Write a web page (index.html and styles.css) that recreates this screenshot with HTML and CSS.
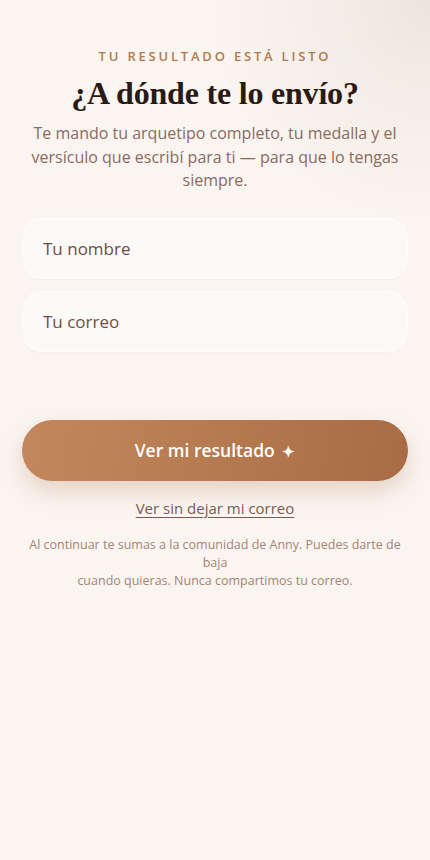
FILE: index.html
```html
<!DOCTYPE html>
<html lang="es">
<head>
<meta charset="utf-8">
<meta name="viewport" content="width=device-width, initial-scale=1">
<title>¿A dónde te lo envío?</title>
<link rel="stylesheet" href="styles.css">
</head>
<body>
<main class="page">
  <p class="eyebrow">TU RESULTADO ESTÁ LISTO</p>
  <h1 class="title">¿A dónde te lo envío?</h1>
  <p class="lead">Te mando tu arquetipo completo, tu medalla y el versículo que escribí para ti — para que lo tengas siempre.</p>
  <form class="form">
    <input class="field" type="text" placeholder="Tu nombre">
    <input class="field" type="email" placeholder="Tu correo">
    <button class="cta" type="button">Ver mi resultado <span class="spark">✦</span></button>
  </form>
  <a class="skip" href="#">Ver sin dejar mi correo</a>
  <p class="note">Al continuar te sumas a la comunidad de Anny. Puedes darte de baja<br>cuando quieras. Nunca compartimos tu correo.</p>
</main>
</body>
</html>
```
FILE: styles.css
```css
* { box-sizing: border-box; }
html, body { margin: 0; padding: 0; }
body {
  min-height: 860px;
  background:
    radial-gradient(circle at 100% 0%, #efe4dc 0, rgba(240,230,222,0.6) 90px, rgba(250,245,241,0) 220px),
    #faf5f1;
  font-family: "Open Sans", "Liberation Sans", sans-serif;
  color: #8a6a5e;
}
.page {
  padding: 47px 22px 40px;
  display: flex;
  flex-direction: column;
  align-items: center;
  text-align: center;
}
.eyebrow {
  margin: 0;
  font-size: 13px;
  font-weight: 600;
  letter-spacing: 2.8px;
  color: #b07a52;
  line-height: 18px;
}
.title {
  margin: 8px 0 0;
  font-family: "Liberation Serif", "DejaVu Serif", serif;
  font-weight: 700;
  font-size: 32px;
  line-height: 40px;
  color: #2a1a14;
  letter-spacing: -0.2px;
}
.lead {
  margin: 9px 0 0;
  font-size: 16px;
  line-height: 23.5px;
  color: #8a6a5e;
}
.form {
  width: 100%;
  margin-top: 25px;
  display: flex;
  flex-direction: column;
  gap: 12px;
}
.field {
  width: 100%;
  height: 61px;
  border-radius: 20px;
  border: 1px solid rgba(255,255,255,0.7);
  background: #fcfaf8;
  padding: 0 20px;
  font-family: inherit;
  font-size: 17px;
  color: #6e4e44;
  outline: none;
  box-shadow: 0 1px 2px rgba(160,120,100,0.04);
}
.field::placeholder { color: #6e4e44; opacity: 1; }
.cta {
  margin-top: 56px;
  width: 100%;
  height: 61px;
  border: none;
  border-radius: 31px;
  background: linear-gradient(100deg, #c4875d 0%, #b67a51 50%, #a86b44 100%);
  color: #fff;
  font-family: inherit;
  font-size: 17.5px;
  font-weight: 600;
  box-shadow: 0 10px 22px rgba(176,120,84,0.28);
  cursor: pointer;
}
.spark { font-size: 15px; margin-left: 3px; }
.skip {
  margin-top: 17px;
  font-size: 15px;
  color: #7a5a50;
  text-decoration: underline;
  text-underline-offset: 3px;
  text-decoration-thickness: 1px;
}
.note {
  margin: 18px 0 0;
  font-size: 12.5px;
  line-height: 18px;
  letter-spacing: 0;
  color: #a48474;
}
```
